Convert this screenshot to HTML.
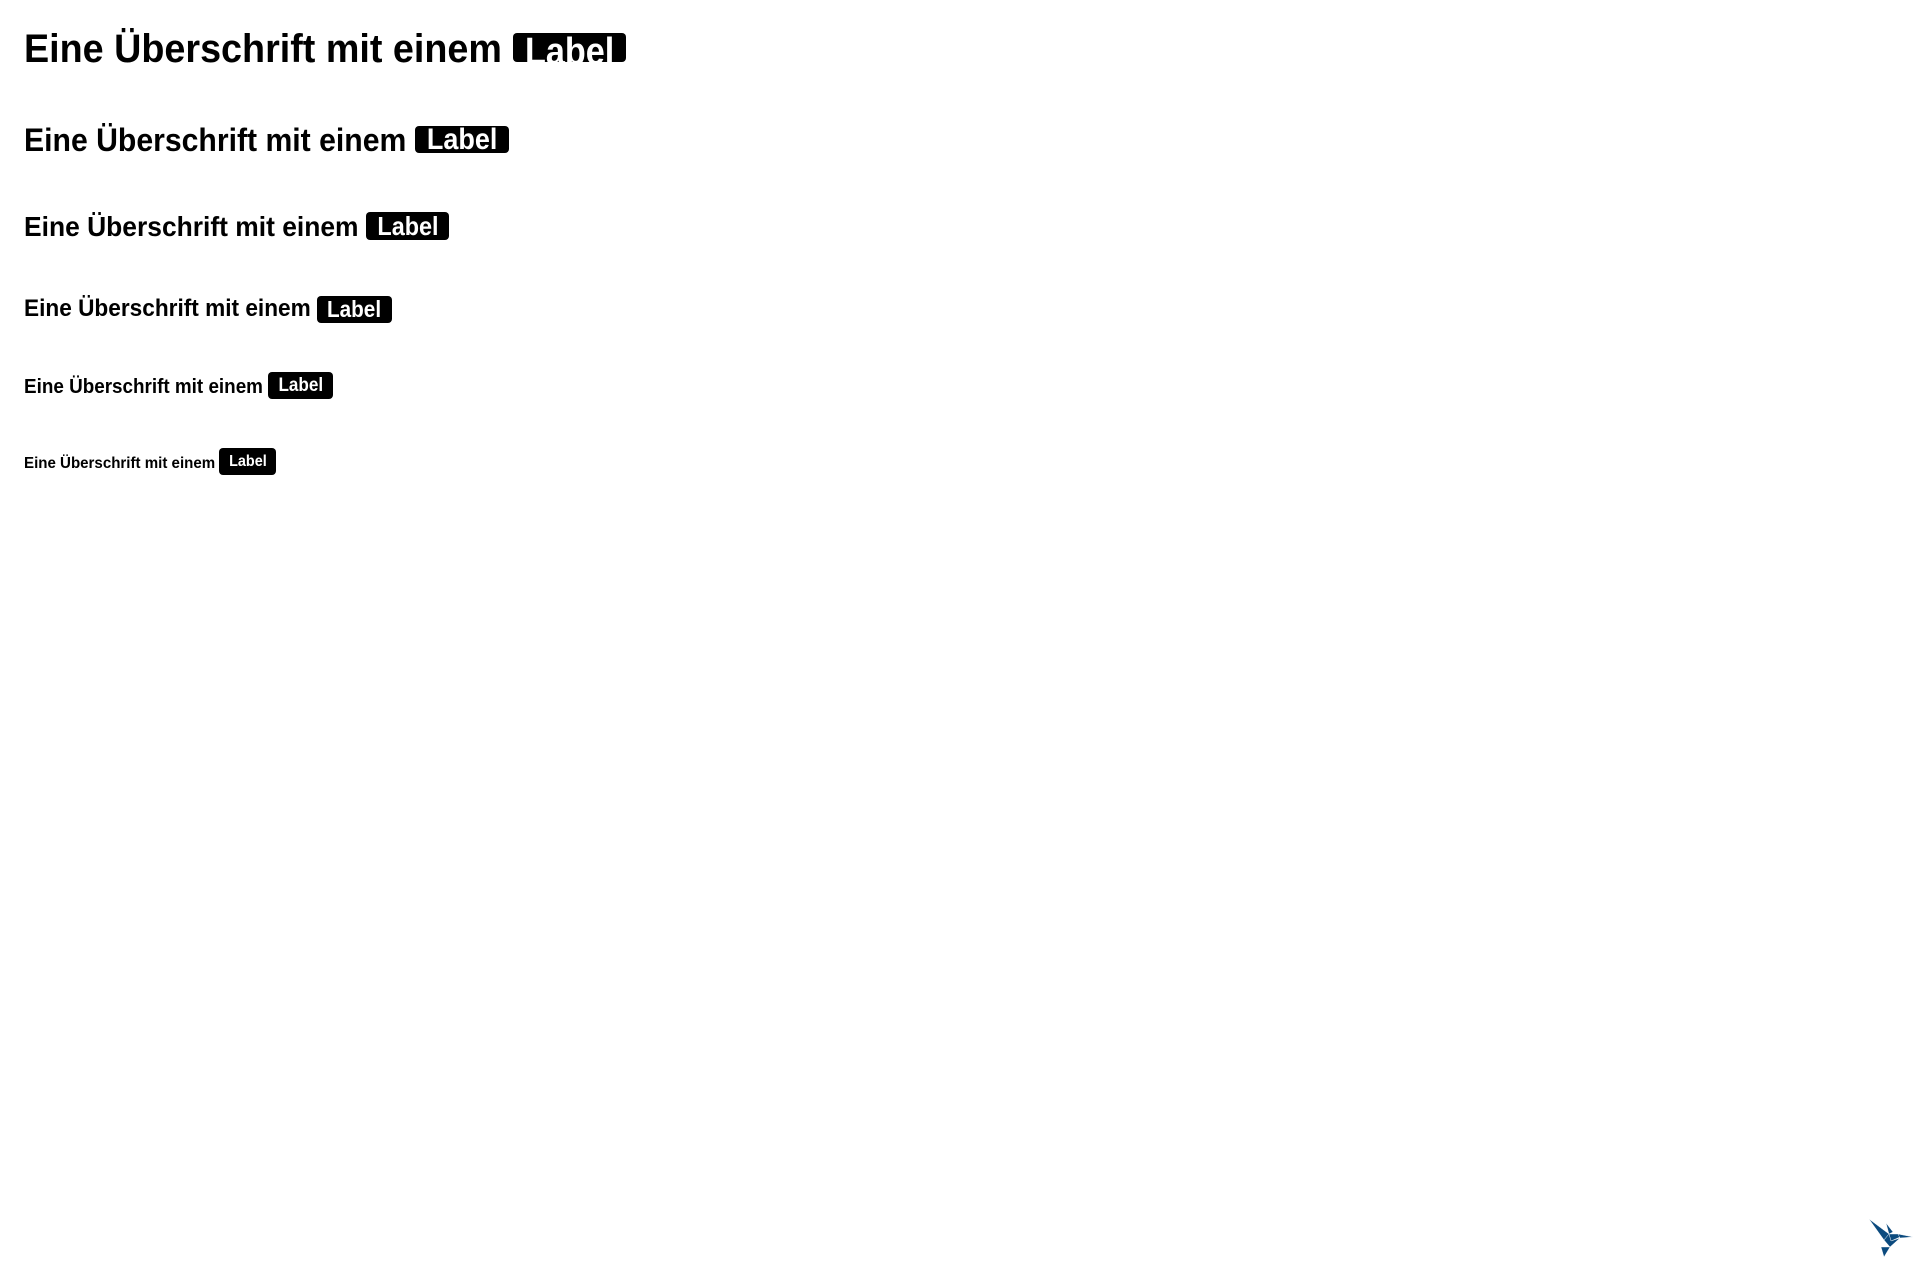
<!DOCTYPE html>
<html><head><meta charset="utf-8"><style>
html,body{margin:0;padding:0;background:#fff;width:1920px;height:1280px;overflow:hidden;font-family:"Liberation Sans",sans-serif;}
.r{position:absolute;left:24px;font-weight:bold;color:#000;line-height:1;white-space:nowrap;transform:scaleX(0.943);transform-origin:left center;}
.b{position:absolute;background:#000;border-radius:4px;color:#fff;font-weight:bold;display:flex;align-items:center;justify-content:center;line-height:1;white-space:nowrap;font-family:"Liberation Sans",sans-serif;}
.b span{display:inline-block;transform:scaleX(0.9);}
</style></head><body>
<div class="r" style="font-size:40px;top:29px;">Eine Überschrift mit einem</div>
<div class="b" style="left:513px;top:33px;width:113px;height:29px;font-size:38px;"><span style="margin-top:8px">Label</span></div>

<div class="r" style="font-size:32px;top:124px;">Eine Überschrift mit einem</div>
<div class="b" style="left:415px;top:126px;width:94px;height:27px;font-size:30px;"><span>Label</span></div>

<div class="r" style="font-size:28px;top:213px;">Eine Überschrift mit einem</div>
<div class="b" style="left:366px;top:212px;width:83px;height:28px;font-size:26px;"><span>Label</span></div>

<div class="r" style="font-size:24px;top:297px;">Eine Überschrift mit einem</div>
<div class="b" style="left:317px;top:296px;width:75px;height:27px;font-size:23px;"><span>Label</span></div>

<div class="r" style="font-size:20px;top:377px;">Eine Überschrift mit einem</div>
<div class="b" style="left:268px;top:372px;width:65px;height:27px;font-size:19px;"><span>Label</span></div>

<div class="r" style="font-size:16px;top:456px;">Eine Überschrift mit einem</div>
<div class="b" style="left:219px;top:448px;width:57px;height:27px;font-size:16px;"><span>Label</span></div>

<svg style="position:absolute;left:1860px;top:1210px" width="60" height="60" viewBox="1860 1210 60 60">
<g fill="#0b4a7e" stroke="#fff" stroke-width="0.4">
<polygon points="1869,1219 1889,1234 1884,1240"/>
<polygon points="1886,1223 1893,1232 1889,1234"/>
<polygon points="1889,1234 1898,1234 1900,1237 1891,1241"/>
<polygon points="1898,1234 1913,1237 1900,1238"/>
<polygon points="1884,1240 1889,1234 1891,1241 1900,1238 1890,1247"/>
<polygon points="1881,1247 1890,1247 1884,1257"/>
</g></svg>
</body></html>
